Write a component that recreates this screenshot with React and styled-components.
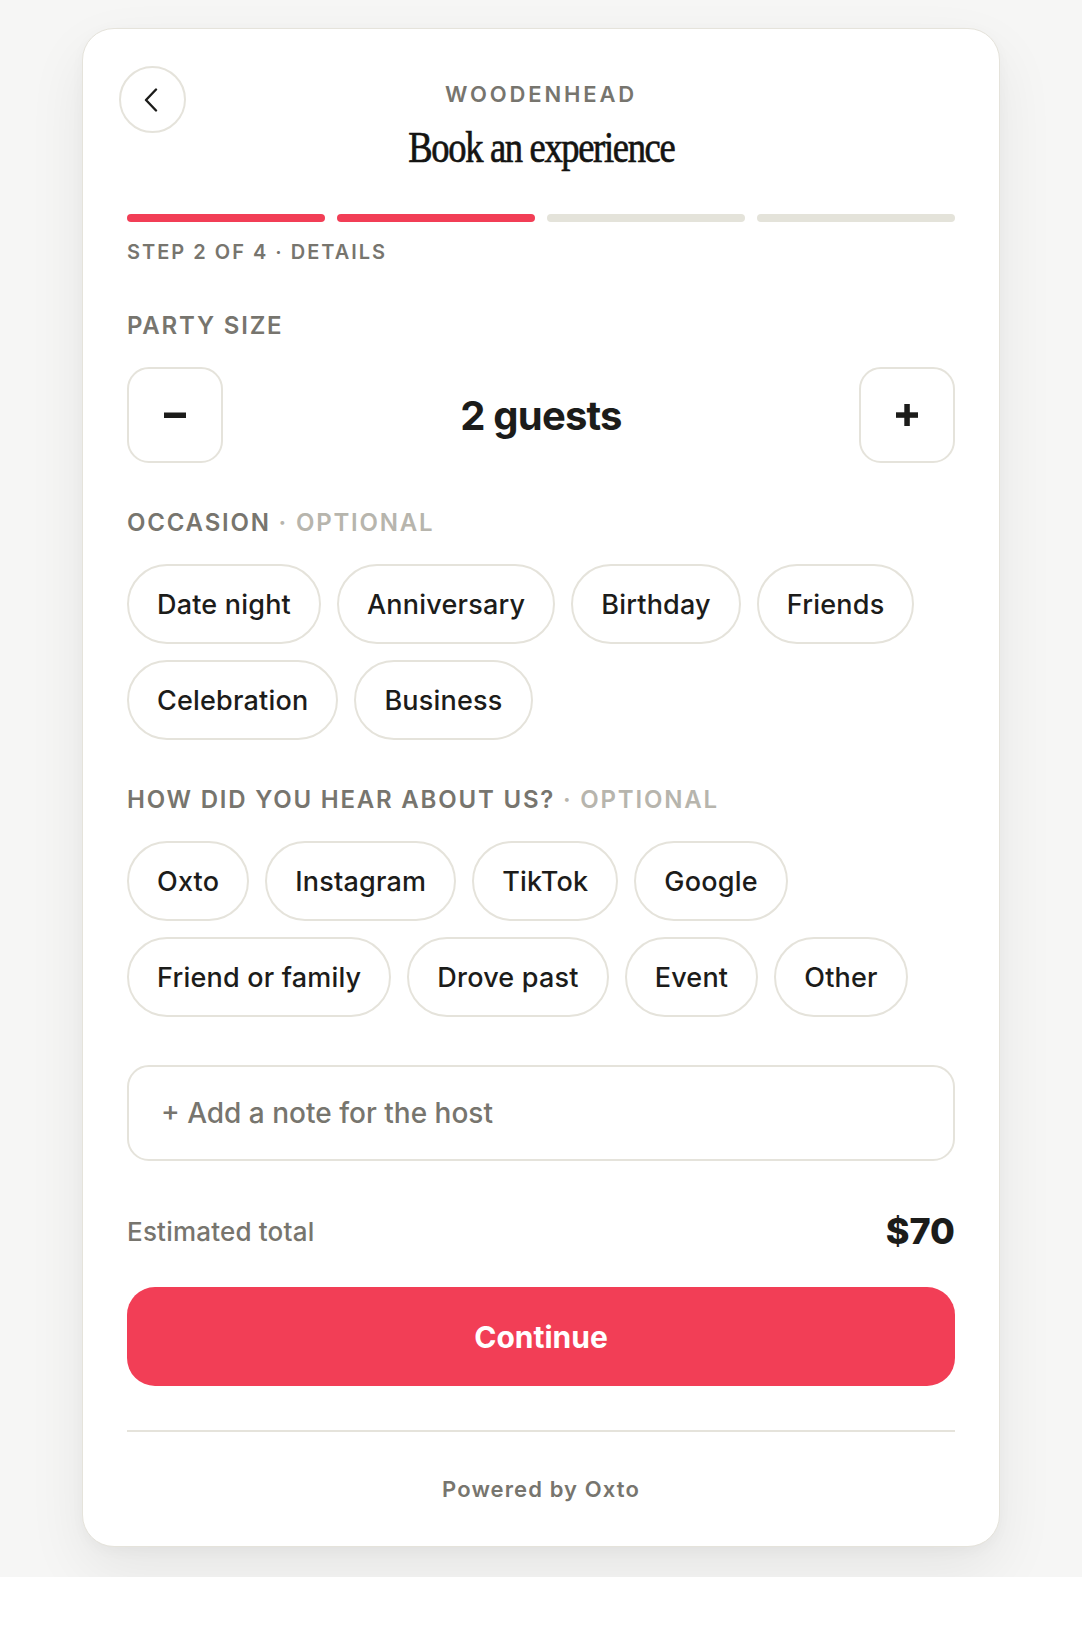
import React from "react";
import styled, { createGlobalStyle } from "styled-components";

const GlobalStyle = createGlobalStyle`
    * { box-sizing: border-box; }
    body {
        margin: 0;
        background: #ffffff;
        font-family: Inter, "Noto Sans", sans-serif;
        color: #1c1c1a;
    }
`;

const red = "#f23e56";
const line = "#e5e3db";
const muted = "#77756e";

const occasions = ["Date night", "Anniversary", "Birthday", "Friends", "Celebration", "Business"];
const sources = ["Oxto", "Instagram", "TikTok", "Google", "Friend or family", "Drove past", "Event", "Other"];

export default function App() {
    const step = 2;

    return (
        <>
            <GlobalStyle />
            <Page>
                <Card>
                    <Header>
                        <BackButton aria-label="Back">
                            <svg width="14" height="24" viewBox="0 0 14 24" fill="none">
                                <path d="M12 1.5 2 12l10 10.5" stroke="#1c1c1a" strokeWidth="2.4" strokeLinecap="round" strokeLinejoin="round" />
                            </svg>
                        </BackButton>
                        <HeaderText>
                            <Venue>WOODENHEAD</Venue>
                            <Title><span>Book an experience</span></Title>
                        </HeaderText>
                        <div />
                    </Header>

                    <Progress>
                        {[1, 2, 3, 4].map((n) => (
                            <Segment key={n} $done={n <= step} />
                        ))}
                    </Progress>
                    <StepLabel>STEP 2 OF 4 · DETAILS</StepLabel>

                    <Section $first>
                        <Label>PARTY SIZE</Label>
                        <Stepper>
                            <StepButton aria-label="Fewer guests">
                                <svg width="22" height="22" viewBox="0 0 22 22">
                                    <rect x="0" y="8.5" width="22" height="5.5" fill="#1c1c1a" />
                                </svg>
                            </StepButton>
                            <Guests>2 guests</Guests>
                            <StepButton aria-label="More guests">
                                <svg width="22" height="22" viewBox="0 0 22 22">
                                    <rect x="0" y="8.3" width="22" height="5.5" fill="#1c1c1a" />
                                    <rect x="8.3" y="0" width="5.5" height="22" fill="#1c1c1a" />
                                </svg>
                            </StepButton>
                        </Stepper>
                    </Section>

                    <Section>
                        <Label>OCCASION <Optional>· OPTIONAL</Optional></Label>
                        <Chips>
                            {occasions.map((o) => (
                                <Chip key={o}>{o}</Chip>
                            ))}
                        </Chips>
                    </Section>

                    <Section>
                        <Label>HOW DID YOU HEAR ABOUT US? <Optional>· OPTIONAL</Optional></Label>
                        <Chips>
                            {sources.map((s) => (
                                <Chip key={s}>{s}</Chip>
                            ))}
                        </Chips>
                    </Section>

                    <NoteButton>+ Add a note for the host</NoteButton>

                    <TotalRow>
                        <TotalLabel>Estimated total</TotalLabel>
                        <TotalPrice>$70</TotalPrice>
                    </TotalRow>

                    <Continue>Continue</Continue>

                    <Footer>Powered by Oxto</Footer>
                </Card>
            </Page>
        </>
    );
}

const Page = styled.div`
    background: #f6f6f5;
    padding: 28px 0 30px;
    overflow: hidden;
    display: flex;
    justify-content: center;
`;

const Card = styled.div`
    width: 918px;
    background: #ffffff;
    border: 1px solid ${line};
    border-radius: 32px;
    padding: 37px 44px 44px;
    box-shadow: 0 24px 60px rgba(0, 0, 0, 0.07), 0 4px 14px rgba(0, 0, 0, 0.03);
    display: flex;
    flex-direction: column;
`;

const Header = styled.div`
    display: grid;
    grid-template-columns: 68px 1fr 68px;
    align-items: start;
    margin: 0 -8px;
`;

const BackButton = styled.button`
    width: 67px;
    height: 67px;
    border-radius: 50%;
    border: 2px solid ${line};
    background: #ffffff;
    display: flex;
    align-items: center;
    justify-content: center;
    padding: 0 4px 0 0;
    cursor: pointer;
`;

const HeaderText = styled.div`
    padding-top: 15px;
    display: flex;
    flex-direction: column;
    align-items: center;
`;

const Venue = styled.div`
    font-size: 22px;
    line-height: 26px;
    font-weight: 600;
    letter-spacing: 0.13em;
    color: ${muted};
`;

const Title = styled.h1`
    margin: 16px 0 0;
    font-family: "Liberation Serif", "DejaVu Serif", serif;
    font-size: 44px;
    line-height: 50px;
    font-weight: 400;
    letter-spacing: -1.6px;
    color: #141412;

    span {
        display: inline-block;
        transform: scaleX(0.83);
        -webkit-text-stroke: 0.7px #141412;
    }
`;

const Progress = styled.div`
    display: grid;
    grid-template-columns: repeat(4, 1fr);
    gap: 12px;
    margin-top: 41px;
`;

const Segment = styled.div`
    height: 8px;
    border-radius: 4px;
    background: ${(p) => (p.$done ? red : "#e4e3da")};
`;

const StepLabel = styled.div`
    margin-top: 18px;
    font-size: 20px;
    line-height: 24px;
    font-weight: 600;
    letter-spacing: 0.1em;
    color: ${muted};
`;

const Section = styled.section`
    margin-top: ${(p) => (p.$first ? "48px" : "46px")};
`;

const Label = styled.div`
    font-size: 24px;
    line-height: 28px;
    font-weight: 600;
    letter-spacing: 0.075em;
    color: ${muted};
    margin-bottom: 27px;
`;

const Optional = styled.span`
    color: #b7b5ad;
`;

const Stepper = styled.div`
    display: flex;
    align-items: center;
    justify-content: space-between;
`;

const StepButton = styled.button`
    width: 96px;
    height: 96px;
    border-radius: 22px;
    border: 2px solid ${line};
    background: #ffffff;
    display: flex;
    align-items: center;
    justify-content: center;
    padding: 0;
    cursor: pointer;
`;

const Guests = styled.div`
    font-size: 40px;
    font-weight: 700;
    letter-spacing: -0.8px;
    color: #1c1c1a;
`;

const Chips = styled.div`
    display: flex;
    flex-wrap: wrap;
    gap: 16px;
`;

const Chip = styled.button`
    height: 80px;
    padding: 0 28px;
    border-radius: 999px;
    border: 2px solid ${line};
    background: #ffffff;
    font-family: Inter, sans-serif;
    font-size: 27px;
    font-weight: 500;
    letter-spacing: 0.2px;
    color: #1c1c1a;
    cursor: pointer;
`;

const NoteButton = styled.button`
    margin-top: 48px;
    height: 96px;
    width: 100%;
    border-radius: 22px;
    border: 2px solid ${line};
    background: #ffffff;
    text-align: left;
    padding: 0 32px;
    font-family: Inter, sans-serif;
    font-size: 28px;
    font-weight: 500;
    color: ${muted};
    cursor: pointer;
`;

const TotalRow = styled.div`
    margin-top: 48px;
    display: flex;
    justify-content: space-between;
    align-items: center;
`;

const TotalLabel = styled.span`
    font-size: 26px;
    font-weight: 500;
    letter-spacing: 0.2px;
    color: ${muted};
`;

const TotalPrice = styled.span`
    font-size: 36px;
    line-height: 44px;
    font-weight: 800;
    color: #1c1c1a;
`;

const Continue = styled.button`
    margin-top: 34px;
    height: 99px;
    width: 100%;
    border: none;
    border-radius: 28px;
    background: ${red};
    color: #ffffff;
    font-family: Inter, sans-serif;
    font-size: 30px;
    font-weight: 700;
    cursor: pointer;
`;

const Footer = styled.div`
    margin-top: 44px;
    border-top: 2px solid ${line};
    padding-top: 44px;
    text-align: center;
    font-size: 22px;
    line-height: 26px;
    font-weight: 600;
    letter-spacing: 0.05em;
    color: ${muted};
`;
